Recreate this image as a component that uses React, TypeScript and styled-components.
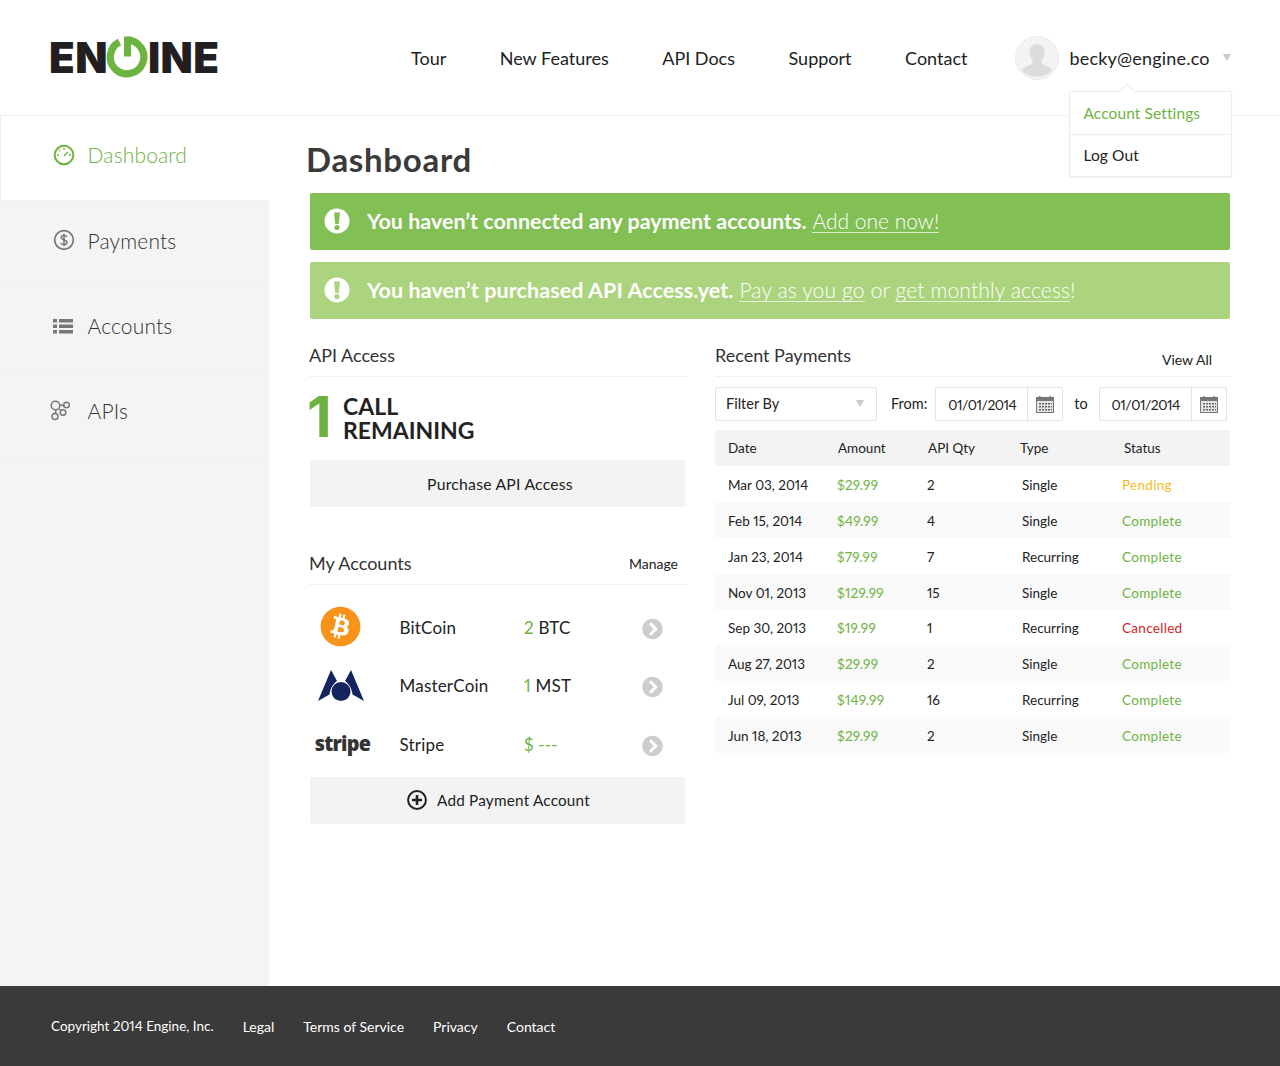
import * as React from 'react'
import styled, { createGlobalStyle } from 'styled-components'
import { FaBitcoin, FaChevronCircleRight } from 'react-icons/fa'

// ______________________________________________________
//
// @ Data

const navLinks = ['Tour', 'New Features', 'API Docs', 'Support', 'Contact']
const footerLinks = ['Legal', 'Terms of Service', 'Privacy', 'Contact']

type Payment = {
  date: string
  amount: string
  qty: string
  type: string
  status: 'Pending' | 'Complete' | 'Cancelled'
}

const payments: Payment[] = [
  { date: 'Mar 03, 2014', amount: '$29.99', qty: '2', type: 'Single', status: 'Pending' },
  { date: 'Feb 15, 2014', amount: '$49.99', qty: '4', type: 'Single', status: 'Complete' },
  { date: 'Jan 23, 2014', amount: '$79.99', qty: '7', type: 'Recurring', status: 'Complete' },
  { date: 'Nov 01, 2013', amount: '$129.99', qty: '15', type: 'Single', status: 'Complete' },
  { date: 'Sep 30, 2013', amount: '$19.99', qty: '1', type: 'Recurring', status: 'Cancelled' },
  { date: 'Aug 27, 2013', amount: '$29.99', qty: '2', type: 'Single', status: 'Complete' },
  { date: 'Jul 09, 2013', amount: '$149.99', qty: '16', type: 'Recurring', status: 'Complete' },
  { date: 'Jun 18, 2013', amount: '$29.99', qty: '2', type: 'Single', status: 'Complete' },
]

const statusColors = { Pending: '#f4bd1f', Complete: '#6db33f', Cancelled: '#d8232a' }

// ______________________________________________________
//
// @ Icons

const GaugeIcon = () => (
  <svg width="22" height="22" viewBox="0 0 22 22" fill="none" stroke="#6db33f">
    <circle cx="11" cy="11" r="9.3" strokeWidth="2" />
    <path d="M11 4v2M4 11h2M16 11h2M6 6l1 1M11 12l3.6-4" strokeWidth="1.4" />
  </svg>
)

const DollarIcon = () => (
  <svg width="22" height="22" viewBox="0 0 22 22" fill="none" stroke="#777">
    <circle cx="11" cy="11" r="9.3" strokeWidth="1.7" />
    <path d="M14 7.8c-.6-1-1.7-1.4-3-1.4-1.600 0-2.800.8-2.800 2.200 0 3 5.800 1.700 5.800 4.700 0 1.500-1.300 2.300-3 2.300-1.400 0-2.600-.5-3.200-1.600M11 4.700v12.600" strokeWidth="1.500" />
  </svg>
)

const ListIcon = () => (
  <svg width="20" height="16" viewBox="0 0 20 16" fill="#777">
    <rect x="0" y="1" width="4" height="3.500" />
    <rect x="6" y="1" width="14" height="3.500" />
    <rect x="0" y="6.500" width="4" height="3.500" />
    <rect x="6" y="6.500" width="14" height="3.500" />
    <rect x="0" y="12" width="4" height="3.500" />
    <rect x="6" y="12" width="14" height="3.500" />
  </svg>
)

const ApisIcon = () => (
  <svg width="21" height="21" viewBox="0 0 21 21" fill="none" stroke="#777" strokeWidth="1.500">
    <circle cx="5.500" cy="5.500" r="4.300" />
    <circle cx="16.500" cy="5" r="2.800" />
    <circle cx="13" cy="12.500" r="2.800" />
    <circle cx="5" cy="16.500" r="3" />
    <path d="M9.800 5.300h3.900M6 9.800l-.5 3.700M9 9l2 1.800" />
  </svg>
)

const AlertIcon = ({ color }: { color: string }) => (
  <svg width="26" height="26" viewBox="0 0 26 26">
    <circle cx="13" cy="13" r="12.500" fill="#fff" />
    <path d="M10 4.500h6l-1.200 11.500h-3.600z" fill={color} />
    <circle cx="13" cy="19.500" r="2.600" fill={color} />
  </svg>
)

const CalendarIcon = () => (
  <svg width="18" height="17" viewBox="0 0 18 17">
    <rect x="0.500" y="1.500" width="17" height="15" fill="#e4e4e4" stroke="#777" />
    <rect x="0" y="1" width="18" height="4" fill="#777" />
    <rect x="3" y="0" width="1.500" height="2" fill="#777" />
    <rect x="13.500" y="0" width="1.500" height="2" fill="#777" />
    <path
      d="M3 7h2v1.500H3zM6 7h2v1.500H6zM9 7h2v1.500H9zM12 7h2v1.500h-2zM15 7h1v1.500h-1zM3 10h2v1.500H3zM6 10h2v1.500H6zM9 10h2v1.500H9zM12 10h2v1.500h-2zM15 10h1v1.500h-1zM3 13h2v1.500H3zM6 13h2v1.500H6zM9 13h2v1.500H9zM12 13h2v1.500h-2zM15 13h1v1.500h-1z"
      fill="#666"
    />
  </svg>
)

const PowerG = () => (
  <svg width="42" height="42" viewBox="0 0 42 42" fill="none">
    <path d="M13.500 6A16.800 16.800 0 1 0 21 4.200" stroke="#6db33f" strokeWidth="7.200" />
    <rect x="18" y="0.500" width="7" height="20" fill="#6db33f" />
  </svg>
)

const AvatarFigure = () => (
  <svg width="44" height="44" viewBox="0 0 44 44">
    <circle cx="22" cy="22" r="21.500" fill="#f3f3f3" stroke="#ebebeb" />
    <path
      d="M22 8c4.700 0 7.600 3.500 7.600 8 0 3.500-1.300 6.300-3.100 8.200v3c1.500 2 9.500 3 10.500 7.300C33.500 38.800 28 40.500 22 40.500S10.500 38.800 7 34.500c1-4.300 9-5.300 10.500-7.300v-3c-1.800-1.900-3.100-4.700-3.100-8.200 0-4.500 2.900-8 7.600-8z"
      fill="#dcdcdc"
    />
  </svg>
)

const MasterCoinLogo = () => (
  <svg width="46" height="32" viewBox="0 0 46 32" fill="#13245f">
    <path d="M13 0l6 11c-4 3-7 8-7.500 13.500L0 31z" />
    <path d="M33 0l-6 11c4 3 7 8 7.500 13.500L46 31z" />
    <circle cx="23" cy="21.500" r="9.500" />
  </svg>
)

const PlusRing = () => (
  <svg width="20" height="20" viewBox="0 0 20 20" fill="none" stroke="#222">
    <circle cx="10" cy="10" r="8.900" strokeWidth="2" />
    <path d="M10 5v10M5 10h10" strokeWidth="2.600" />
  </svg>
)

// ______________________________________________________
//
// @ Styles

const GlobalStyle = createGlobalStyle`
  html, body {
    margin: 0;
    padding: 0;
    background: #fff;
  }
  body {
    font-family: Lato, "Open Sans", sans-serif;
    font-feature-settings: 'pnum';
    color: #222;
  }
  * {
    box-sizing: border-box;
  }
`

const Page = styled.div`
  width: 1280px;
  height: 1066px;
  display: flex;
  flex-direction: column;
`

const Header = styled.header`
  height: 116px;
  flex: none;
  display: flex;
  align-items: center;
  padding: 0 49px 0 50px;
  border-bottom: 1px solid #f1f1f1;
`

const Logo = styled.div`
  display: flex;
  align-items: center;
  flex: none;
  width: 168px;
  height: 42px;
  margin-top: -1px;
  font-family: Inter, "Liberation Sans", sans-serif;
  font-weight: 900;
  font-size: 42px;
  line-height: 42px;
  color: #231f20;
  letter-spacing: 0.4px;
  > svg {
    flex: none;
    margin: 0 0 0 -1px;
  }
`

const LogoText = styled.span<{ $width: number; $shift: number }>`
  display: inline-block;
  flex: none;
  width: ${p => p.$width}px;
  margin-left: ${p => p.$shift}px;
  padding-top: 1px;
`

const Nav = styled.nav`
  margin-left: 193px;
  display: flex;
  flex: none;
  gap: 53.500px;
  font-size: 18px;
  white-space: nowrap;
  color: #222;
`

const UserMenu = styled.div`
  position: relative;
  margin-left: 48px;
  display: flex;
  align-items: center;
  flex: none;
  white-space: nowrap;
  font-size: 18px;
  letter-spacing: 0.2px;
`

const Avatar = styled.div`
  width: 44px;
  height: 44px;
  margin-right: 10px;
`

const Caret = styled.span<{ $size?: number }>`
  display: inline-block;
  width: 0;
  height: 0;
  border-left: ${p => p.$size ?? 4.5}px solid transparent;
  border-right: ${p => p.$size ?? 4.5}px solid transparent;
  border-top: ${p => (p.$size ?? 4.5) * 1.6}px solid #c9c9c9;
`

const UserCaret = styled(Caret)`
  margin-left: 13px;
`

const Dropdown = styled.div`
  position: absolute;
  top: 55px;
  left: 54px;
  width: 163px;
  height: 86px;
  background: #fff;
  border: 1px solid #ececec;
  box-shadow: 0 1px 2px rgba(0, 0, 0, 0.06);
  border-radius: 2px;
  font-size: 15.500px;
  letter-spacing: 0.1px;
  z-index: 2;
  &::before {
    content: '';
    position: absolute;
    top: -6px;
    left: 51px;
    width: 11px;
    height: 11px;
    background: #fff;
    border-top: 1px solid #ececec;
    border-left: 1px solid #ececec;
    transform: rotate(45deg);
  }
`

const DropdownItem = styled.div<{ $active?: boolean }>`
  position: relative;
  height: ${p => (p.$active ? 43 : 41)}px;
  padding: ${p => (p.$active ? 12 : 11)}px 0 0 13px;
  color: ${p => (p.$active ? '#6db33f' : '#222')};
  border-bottom: ${p => (p.$active ? '1px solid #ececec' : 'none')};
`

const Body = styled.div`
  flex: 1;
  display: flex;
  min-height: 0;
`

const Sidebar = styled.aside`
  width: 269px;
  flex: none;
  background: #f4f4f4;
`

const SideItem = styled.div<{ $active?: boolean }>`
  height: 85px;
  display: flex;
  align-items: center;
  padding: 0 0 7px ${p => (p.$active ? 52 : 53)}px;
  font-size: 21px;
  font-weight: 300;
  letter-spacing: 0.15px;
  color: ${p => (p.$active ? '#6db33f' : '#333')};
  background: ${p => (p.$active ? '#fff' : 'transparent')};
  border-bottom: 1px solid #efefef;
  border-left: ${p => (p.$active ? '1px solid #efefef' : 'none')};
  &:nth-child(2) {
    height: 86px;
  }
`

const SideIcon = styled.span<{ $shift?: number }>`
  width: 34.500px;
  flex: none;
  display: flex;
  align-items: center;
  margin-left: ${p => p.$shift ?? 0}px;
  margin-right: ${p => -(p.$shift ?? 0)}px;
`

const Main = styled.main`
  flex: 1;
  padding: 24px 50px 0 40px;
`

const Title = styled.h1`
  margin: 0 0 13px -3px;
  height: 40px;
  font-size: 33px;
  line-height: 38px;
  font-weight: 700;
  color: #3a3a3a;
  letter-spacing: 0.7px;
`

const Alert = styled.div<{ $tone: string; $wide?: boolean }>`
  height: 57px;
  margin: 0 0 12px 1px;
  background: ${p => p.$tone};
  border-radius: 2px;
  display: flex;
  align-items: center;
  padding: 0 0 2px 14px;
  color: #fff;
  font-size: 21.500px;
  font-weight: 300;
  > svg {
    flex: none;
    margin: 0 17px 0 0;
  }
  b {
    font-weight: 700;
    letter-spacing: ${p => (p.$wide ? 0.08 : 0)}px;
  }
  a {
    color: #fff;
    font-size: 21px;
    letter-spacing: ${p => (p.$wide ? 0.15 : 0)}px;
    text-decoration: none;
    border-bottom: 1px solid rgba(255, 255, 255, 0.7);
    line-height: 23px;
  }
`

const Columns = styled.div`
  display: flex;
  gap: 27px;
  margin-top: 25px;
`

const LeftColumn = styled.section`
  width: 379px;
  flex: none;
`

const RightColumn = styled.section`
  width: 515px;
  flex: none;
`

const SectionHead = styled.div`
  height: 33px;
  display: flex;
  justify-content: space-between;
  border-bottom: 1px solid #f1f1f1;
`

const SectionTitle = styled.h2`
  margin: 0;
  font-size: 18px;
  line-height: 22px;
  font-weight: 400;
  color: #333;
`

const SectionLink = styled.span<{ $right: number; $top: number }>`
  margin: ${p => p.$top}px ${p => p.$right}px 0 0;
  font-size: 14px;
  line-height: 20px;
  color: #222;
`

const Remaining = styled.div`
  height: 83px;
  display: flex;
  padding: 17px 0 0 0;
`

const BigNumber = styled.div`
  width: 34px;
  flex: none;
  font-family: Inter, Lato, sans-serif;
  font-size: 57px;
  line-height: 46px;
  font-weight: 700;
  color: #6db33f;
  margin-left: -2px;
  margin-right: 2px;
`

const RemainingText = styled.div`
  font-size: 23px;
  line-height: 24px;
  font-weight: 700;
  color: #222;
`

const GreyButton = styled.div<{ $shift: number; $size: number }>`
  height: 47px;
  width: 375px;
  margin-left: 1px;
  padding-left: ${p => p.$shift}px;
  background: #f3f3f3;
  border-radius: 2px;
  display: flex;
  align-items: center;
  justify-content: center;
  gap: 10px;
  font-size: ${p => p.$size}px;
  letter-spacing: 0.2px;
  color: #222;
`

const MyAccounts = styled.div`
  margin-top: 45px;
`

const AccountList = styled.div`
  padding: 13px 0 3px;
`

const AccountRow = styled.div`
  height: 58.500px;
  display: grid;
  grid-template-columns: 90.500px 124.500px 119px 20px;
  align-items: center;
  font-size: 17px;
  letter-spacing: 0.2px;
  color: #222;
  font-weight: 400;
`

const AccountLogo = styled.div`
  display: flex;
  justify-content: center;
  width: 64px;
`

const BitcoinMark = styled(FaBitcoin)`
  margin: -1px 0 0 -2px;
`

const StripeMark = styled.span`
  font-family: "Open Sans", sans-serif;
  font-weight: 800;
  font-size: 21px;
  letter-spacing: -0.8px;
  color: #333;
  display: inline-block;
  transform: scaleX(0.94);
  margin: -2px 0 0 2px;
`

const Balance = styled.span`
  color: #6db33f;
`

const RowArrow = styled.span`
  display: flex;
  color: #cdcdcd;
  font-size: 22px;
  margin: 3px 0 0 -1px;
`

const FilterBar = styled.div`
  display: flex;
  align-items: center;
  margin: 10px 0 9px;
  height: 34px;
  font-size: 14.500px;
  color: #222;
`

const FilterSelect = styled.div`
  width: 162px;
  height: 34px;
  border: 1px solid #e3e3e3;
  border-radius: 2px;
  display: flex;
  align-items: center;
  justify-content: space-between;
  padding: 0 12px 2px 10px;
`

const FromLabel = styled.span`
  margin: 0 8px 2px 14px;
`

const ToLabel = styled.span`
  margin: 0 11px 2px 11px;
`

const DateField = styled.div`
  width: 128px;
  height: 34px;
  border: 1px solid #e3e3e3;
  border-radius: 2px;
  display: grid;
  grid-template-columns: 90px 1fr;
  align-items: center;
  text-align: center;
  font-size: 14px;
  letter-spacing: -0.5px;
  padding-left: 1px;
  > span {
    display: flex;
    align-items: center;
    justify-content: center;
    height: 100%;
    border-left: 1px solid #e3e3e3;
  }
`

const TableRow = styled.div<{ $head?: boolean }>`
  height: ${p => (p.$head ? '36px' : '35.875px')};
  display: grid;
  grid-template-columns: 109px 90px 95px 100px 1fr;
  align-items: center;
  padding: ${p => (p.$head ? 0 : 2)}px 0 0 13px;
  font-size: 13.500px;
  color: #222;
  background: ${p => (p.$head ? '#f3f3f3' : '#fff')};
  &:nth-child(odd) {
    background: ${p => (p.$head ? '#f3f3f3' : '#f9f9f9')};
  }
`

const HeadRow = styled(TableRow)`
  grid-template-columns: 110px 90px 92px 104px 1fr;
`

const Colored = styled.span<{ $color: string }>`
  color: ${p => p.$color};
  letter-spacing: 0.3px;
`

const Footer = styled.footer`
  height: 80px;
  flex: none;
  background: #3a3a3a;
  display: flex;
  align-items: center;
  gap: 29px;
  padding: 0 0 0 51px;
  color: #fff;
  font-size: 13.500px;
`

const FooterLink = styled.span`
  font-size: 14px;
`

// ______________________________________________________
//
// @ View

export default function App() {
  return (
    <Page>
      <GlobalStyle />
      <Header>
        <Logo>
          <LogoText $width={58} $shift={-1}>EN</LogoText>
          <PowerG />
          <LogoText $width={69} $shift={0}>INE</LogoText>
        </Logo>
        <Nav>
          {navLinks.map(link => (
            <span key={link}>{link}</span>
          ))}
        </Nav>
        <UserMenu>
          <Avatar>
            <AvatarFigure />
          </Avatar>
          becky@engine.co
          <UserCaret />
          <Dropdown>
            <DropdownItem $active>Account Settings</DropdownItem>
            <DropdownItem>Log Out</DropdownItem>
          </Dropdown>
        </UserMenu>
      </Header>
      <Body>
        <Sidebar>
          <SideItem $active>
            <SideIcon><GaugeIcon /></SideIcon>
            Dashboard
          </SideItem>
          <SideItem>
            <SideIcon><DollarIcon /></SideIcon>
            Payments
          </SideItem>
          <SideItem>
            <SideIcon><ListIcon /></SideIcon>
            Accounts
          </SideItem>
          <SideItem>
            <SideIcon $shift={-3}><ApisIcon /></SideIcon>
            APIs
          </SideItem>
        </Sidebar>
        <Main>
          <Title>Dashboard</Title>
          <Alert $tone="#82bf54">
            <AlertIcon color="#82bf54" />
            <b>You haven’t connected any payment accounts.</b>&nbsp;<a>Add one now!</a>
          </Alert>
          <Alert $tone="#acd47e" $wide>
            <AlertIcon color="#acd47e" />
            <b>You haven’t purchased API Access.yet.</b>&nbsp;<a>Pay as you go</a>&nbsp;or&nbsp;<a>get monthly access</a>!
          </Alert>
          <Columns>
            <LeftColumn>
              <SectionHead>
                <SectionTitle>API Access</SectionTitle>
              </SectionHead>
              <Remaining>
                <BigNumber>1</BigNumber>
                <RemainingText>
                  CALL
                  <br />
                  REMAINING
                </RemainingText>
              </Remaining>
              <GreyButton $shift={5} $size={15.8}>Purchase API Access</GreyButton>
              <MyAccounts>
                <SectionHead>
                  <SectionTitle>My Accounts</SectionTitle>
                  <SectionLink $right={10} $top={2}>Manage</SectionLink>
                </SectionHead>
                <AccountList>
                  <AccountRow>
                    <AccountLogo><BitcoinMark size={41} color="#f7931a" /></AccountLogo>
                    <span>BitCoin</span>
                    <span><Balance>2</Balance> BTC</span>
                    <RowArrow><FaChevronCircleRight /></RowArrow>
                  </AccountRow>
                  <AccountRow>
                    <AccountLogo><MasterCoinLogo /></AccountLogo>
                    <span>MasterCoin</span>
                    <span><Balance>1</Balance> MST</span>
                    <RowArrow><FaChevronCircleRight /></RowArrow>
                  </AccountRow>
                  <AccountRow>
                    <AccountLogo><StripeMark>stripe</StripeMark></AccountLogo>
                    <span>Stripe</span>
                    <Balance>$ ---</Balance>
                    <RowArrow><FaChevronCircleRight /></RowArrow>
                  </AccountRow>
                </AccountList>
                <GreyButton $shift={2} $size={15.3}>
                  <PlusRing />
                  Add Payment Account
                </GreyButton>
              </MyAccounts>
            </LeftColumn>
            <RightColumn>
              <SectionHead>
                <SectionTitle>Recent Payments</SectionTitle>
                <SectionLink $right={18} $top={6}>View All</SectionLink>
              </SectionHead>
              <FilterBar>
                <FilterSelect>
                  Filter By
                  <Caret />
                </FilterSelect>
                <FromLabel>From:</FromLabel>
                <DateField>
                  01/01/2014
                  <span><CalendarIcon /></span>
                </DateField>
                <ToLabel>to</ToLabel>
                <DateField>
                  01/01/2014
                  <span><CalendarIcon /></span>
                </DateField>
              </FilterBar>
              <HeadRow $head>
                <span>Date</span>
                <span>Amount</span>
                <span>API Qty</span>
                <span>Type</span>
                <span>Status</span>
              </HeadRow>
              {payments.map(p => (
                <TableRow key={p.date}>
                  <span>{p.date}</span>
                  <Colored $color="#6db33f">{p.amount}</Colored>
                  <span>{p.qty}</span>
                  <span>{p.type}</span>
                  <Colored $color={statusColors[p.status]}>{p.status}</Colored>
                </TableRow>
              ))}
            </RightColumn>
          </Columns>
        </Main>
      </Body>
      <Footer>
        <span>Copyright 2014 Engine, Inc.</span>
        {footerLinks.map(link => (
          <FooterLink key={link}>{link}</FooterLink>
        ))}
      </Footer>
    </Page>
  )
}
